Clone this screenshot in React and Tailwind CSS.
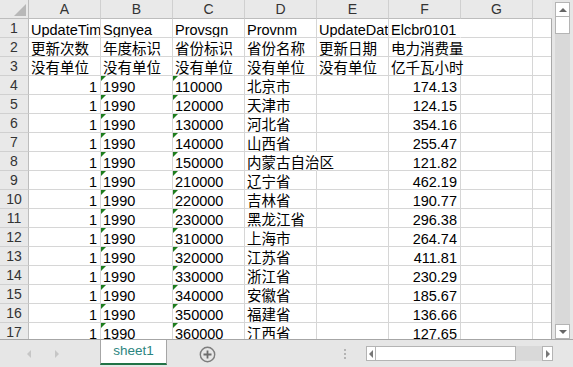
import React from 'react'

const letters = ['A', 'B', 'C', 'D', 'E', 'F', 'G']

const provinces = [
  ['110000', '北京市', '174.13'],
  ['120000', '天津市', '124.15'],
  ['130000', '河北省', '354.16'],
  ['140000', '山西省', '255.47'],
  ['150000', '内蒙古自治区', '121.82'],
  ['210000', '辽宁省', '462.19'],
  ['220000', '吉林省', '190.77'],
  ['230000', '黑龙江省', '296.38'],
  ['310000', '上海市', '264.74'],
  ['320000', '江苏省', '411.81'],
  ['330000', '浙江省', '230.29'],
  ['340000', '安徽省', '185.67'],
  ['350000', '福建省', '136.66'],
  ['360000', '江西省', '127.65'],
]

const headRows = [
  ['UpdateTime', 'Sgnyea', 'Provsgn', 'Provnm', 'UpdateDate', 'Elcbr0101', ''],
  ['更新次数', '年度标识', '省份标识', '省份名称', '更新日期', '电力消费量', ''],
  ['没有单位', '没有单位', '没有单位', '没有单位', '没有单位', '亿千瓦小时', ''],
]

const rows = [
  ...headRows.map(r => r.map((t, j) => ({ t, spill: j === 5 && t.length > 4 }))),
  ...provinces.map(([code, name, val]) => [
    { t: '1', r: true },
    { t: '1990', g: true },
    { t: code, g: true },
    { t: name, spill: name.length > 4 },
    { t: '' },
    { t: val, r: true },
    { t: '' },
  ]),
]

function Cell({ t, r, g, spill }) {
  return (
    <div
      className={`relative w-[72px] h-[19px] shrink-0 border-b border-[#d6d6d6] flex items-end whitespace-nowrap
        ${spill ? 'overflow-visible z-10 border-r border-r-transparent' : 'overflow-hidden border-r border-r-[#d6d6d6]'}
        ${r ? 'justify-end pr-[3px]' : 'pl-[2px]'}`}
    >
      {g && (
        <div className="absolute left-0 top-0 w-0 h-0 border-t-[5px] border-r-[5px] border-t-[#1d7d1d] border-r-transparent" />
      )}
      <span className="leading-[14px]">{t}</span>
    </div>
  )
}

export default function App() {
  return (
    <div className="w-[573px] h-[367px] bg-[#e6e6e6] flex flex-col overflow-hidden text-[14.5px] text-black font-['Liberation_Sans','Noto_Sans_CJK_SC',sans-serif]">
      <div className="flex h-[339px]">
        {/* grid */}
        <div className="w-[552px] h-[339px] overflow-hidden flex flex-col">
          <div className="flex h-[19px] shrink-0 bg-[#e9e9e9] text-[#333] text-[14px]">
            <div className="w-[29px] h-[19px] border-r border-b border-[#bdbdbd] flex items-end justify-end pr-[2px] pb-[2px]">
              <svg width="12" height="12" viewBox="0 0 12 12">
                <polygon points="12,0 12,12 0,12" fill="#b8b8b8" />
              </svg>
            </div>
            {letters.map(l => (
              <div key={l} className="w-[72px] h-[19px] shrink-0 border-r border-r-[#d0d0d0] border-b border-b-[#bdbdbd] flex items-center justify-center pt-[1px]">
                {l}
              </div>
            ))}
            <div className="flex-1 h-[19px] border-b border-b-[#bdbdbd]" />
          </div>
          <div className="flex-1 bg-white border-r border-[#a8a8a8]">
            {rows.map((cells, i) => (
              <div key={i} className="flex h-[19px]">
                <div className="w-[29px] h-[19px] shrink-0 bg-[#e9e9e9] border-r border-r-[#bdbdbd] border-b border-b-[#d0d0d0] flex items-center justify-center text-[14px] text-[#333] pt-[1px]">
                  {i + 1}
                </div>
                {cells.map((c, j) => (
                  <Cell key={j} {...c} />
                ))}
                <div className="flex-1 h-[19px] border-b border-[#d6d6d6]" />
              </div>
            ))}
          </div>
        </div>

        {/* vertical scrollbar */}
        <div className="flex-1 flex flex-col items-center pt-[2px]">
          <div className="w-[15px] h-[15px] bg-white border border-[#b4b4b4] flex items-center justify-center">
            <div className="w-0 h-0 border-b-[4px] border-l-[4px] border-r-[4px] border-b-[#666] border-l-transparent border-r-transparent" />
          </div>
          <div className="w-[15px] flex-1 bg-[#d9d9d9] flex flex-col">
            <div className="h-[17px] bg-white border border-t-0 border-[#b4b4b4]" />
            <div className="flex-1" />
          </div>
          <div className="w-[15px] h-[15px] bg-white border border-[#b4b4b4] flex items-center justify-center">
            <div className="w-0 h-0 border-t-[4px] border-l-[4px] border-r-[4px] border-t-[#666] border-l-transparent border-r-transparent" />
          </div>
        </div>
      </div>

      {/* sheet bar */}
      <div className="h-[28px] flex border-t border-[#a6a6a6]">
        <div className="w-[100px] flex items-center pl-[27px] gap-[24px]">
          <div className="w-0 h-0 border-r-[4px] border-t-[4px] border-b-[4px] border-r-[#c6c6c6] border-t-transparent border-b-transparent" />
          <div className="w-0 h-0 border-l-[4px] border-t-[4px] border-b-[4px] border-l-[#c6c6c6] border-t-transparent border-b-transparent" />
        </div>
        <div className="w-[67px] h-[25px] bg-white border-x border-[#a6a6a6] border-b-2 border-b-[#217346] flex items-center justify-center text-[13.5px] text-[#2b8580] pb-[1px]">
          sheet1
        </div>
        <div className="w-[50px] flex items-center pl-[32px] pt-[1px]">
          <svg width="17" height="17" viewBox="0 0 17 17">
            <circle cx="8.5" cy="8.5" r="7.2" fill="none" stroke="#7d7d7d" strokeWidth="1.4" />
            <path d="M8.5 4.5v8M4.5 8.5h8" stroke="#6d6d6d" strokeWidth="1.8" />
          </svg>
        </div>
        <div className="w-[149px] flex flex-col items-end justify-center gap-[2px] pr-[20px]">
          <div className="w-[2px] h-[2px] bg-[#b4b4b4]" />
          <div className="w-[2px] h-[2px] bg-[#b4b4b4]" />
          <div className="w-[2px] h-[2px] bg-[#b4b4b4]" />
        </div>
        <div className="pt-[6px] flex h-[21px]">
          <div className="w-[10px] h-[15px] bg-white border border-[#b4b4b4] flex items-center justify-center">
            <div className="w-0 h-0 border-r-[4px] border-t-[4px] border-b-[4px] border-r-[#777] border-t-transparent border-b-transparent" />
          </div>
          <div className="w-[140px] h-[15px] bg-white border border-l-0 border-[#b4b4b4]" />
          <div className="w-[26px] h-[15px] bg-[#d9d9d9]" />
          <div className="w-[11px] h-[15px] bg-white border border-[#b4b4b4] flex items-center justify-center">
            <div className="w-0 h-0 border-l-[4px] border-t-[4px] border-b-[4px] border-l-[#777] border-t-transparent border-b-transparent" />
          </div>
        </div>
      </div>
    </div>
  )
}
